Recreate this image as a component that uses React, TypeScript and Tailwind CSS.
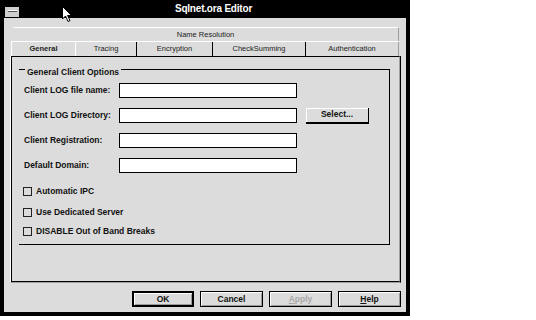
import React from "react";

const FONT = "font-['Liberation_Sans',Arial,sans-serif]";

const TABS = [
  { label: "General", w: "w-[65px]", active: true },
  { label: "Tracing", w: "w-[61px]" },
  { label: "Encryption", w: "w-[76px]" },
  { label: "CheckSumming", w: "w-[93px]" },
  { label: "Authentication", w: "w-[93px]", last: true },
];

const FIELDS = [
  "Client LOG file name:",
  "Client LOG Directory:",
  "Client Registration:",
  "Default Domain:",
];

function Checkbox({ label, className }: { label: string; className?: string }) {
  return (
    <div className={`flex items-center h-[10px] ${className ?? ""}`}>
      <div className="w-[9px] h-[9px] border border-[#222]" />
      <span className="ml-[4px] text-[8.5px] font-bold text-[#111] leading-none">{label}</span>
    </div>
  );
}

function Button({
  children,
  primary,
  disabled,
  className,
}: {
  children: React.ReactNode;
  primary?: boolean;
  disabled?: boolean;
  className?: string;
}) {
  return (
    <div
      className={`h-[16px] flex items-center justify-center bg-[#dcdcdc] text-[8.5px] font-bold leading-none shadow-[inset_1px_1px_0_#fff,inset_-1px_-1px_0_#9a9a9a] ${
        primary ? "border-2 border-black" : "border border-black"
      } ${disabled ? "text-[#a8a8a8]" : "text-[#111]"} ${className ?? ""}`}
    >
      {children}
    </div>
  );
}

export default function App() {
  return (
    <div className={`relative w-[536px] h-[320px] bg-white ${FONT}`}>
      {/* window frame */}
      <div className="w-[410px] h-[316px] bg-black px-[4px] pb-[4px] flex flex-col">
        {/* title bar */}
        <div className="h-[18px] flex items-start">
          <div className="ml-[1px] mt-[7px] w-[14px] h-[10px] bg-[#cfcfcf] flex items-start justify-center pt-[3px]">
            <div className="w-[9px] h-[2px] bg-[#555] border-t border-white" />
          </div>
          <div className="flex-1 self-center text-center text-white text-[10px] font-bold tracking-[-0.2px] leading-none pl-[2px]">
            Sqlnet.ora Editor
          </div>
        </div>

        {/* client area */}
        <div className="flex-1 bg-[#dcdcdc] flex flex-col">
          {/* back tab row */}
          <div className="ml-[9px] mt-[9px] w-[386px] h-[14px] border-t border-white border-r border-r-[#a0a0a0] flex items-center justify-center">
            <span className="text-[7.5px] text-[#222] leading-none">Name Resolution</span>
          </div>
          {/* front tab row */}
          <div className="ml-[7px] w-[388px] h-[15px] flex border-t border-white">
            {TABS.map((t) => (
              <div
                key={t.label}
                className={`${t.w} h-full flex items-center justify-center text-[7.5px] leading-none text-[#222] ${
                  t.active ? "font-bold border-l border-white" : ""
                } ${t.last ? "border-r border-[#a0a0a0]" : "border-r border-black"}`}
              >
                {t.label}
              </div>
            ))}
          </div>

          {/* panel */}
          <div className="ml-[6px] w-[391px] h-[227px] border-l border-white border-b border-b-[#a0a0a0] border-r border-r-black">
            <div className="h-full border-t border-l border-b border-black border-r border-r-[#a0a0a0] pt-[12px] pl-[7px]">
              {/* group box */}
              <div className="relative w-[371px] h-[176px] border-t border-r border-b border-black">
                <span className="absolute -top-[2px] left-[6px] px-[2px] bg-[#dcdcdc] text-[8.5px] font-bold text-[#111] leading-none">
                  General Client Options
                </span>
                <div className="pt-[13px] pl-[5px] flex flex-col gap-[10px]">
                  {FIELDS.map((f, i) => (
                    <div key={f} className="flex items-center h-[15px]">
                      <span className="w-[95px] text-[8.5px] font-bold text-[#111] leading-none">{f}</span>
                      <div className="w-[178px] h-[15px] bg-white border border-black" />
                      {i === 1 && (
                        <div className="ml-[9px] w-[63px] h-[16px] bg-[#dcdcdc] border-b-2 border-r border-black shadow-[inset_1px_1px_0_#fff] flex items-center justify-center text-[8.5px] font-bold text-[#111] leading-none">
                          Select...
                        </div>
                      )}
                    </div>
                  ))}
                </div>
                <div className="pl-[4px]">
                  <Checkbox label="Automatic IPC" className="mt-[13px]" />
                  <Checkbox label="Use Dedicated Server" className="mt-[11px]" />
                  <Checkbox label="DISABLE Out of Band Breaks" className="mt-[9px]" />
                </div>
              </div>
            </div>
          </div>

          {/* buttons */}
          <div className="mt-[8px] pr-[5px] flex justify-end gap-[6px]">
            <Button primary className="w-[62px]">OK</Button>
            <Button className="w-[63px]">Cancel</Button>
            <Button disabled className="w-[63px]">
              <span className="underline">A</span>pply
            </Button>
            <Button className="w-[63px]">
              <span className="underline">H</span>elp
            </Button>
          </div>
        </div>
      </div>

      {/* mouse pointer */}
      <svg className="absolute left-[62px] top-[6px]" width="11" height="17" viewBox="0 0 11 17">
        <path d="M0.5 0.5 L0.5 13 L3.5 10 L6 15.5 L8 14.5 L5.5 9.5 L9.5 9.5 Z" fill="#fff" stroke="#000" strokeWidth="1" />
      </svg>
    </div>
  );
}
